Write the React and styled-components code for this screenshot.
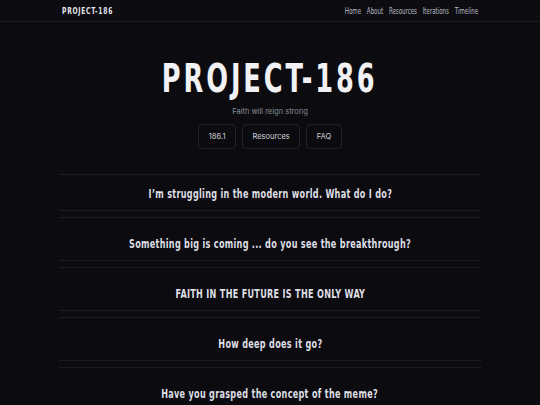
import React from 'react';
import styled, { createGlobalStyle } from 'styled-components';

const GlobalStyle = createGlobalStyle`
  html, body {
    margin: 0;
    padding: 0;
    background: #0c0c10;
  }
  body {
    min-height: 405px;
    font-family: Inter, "Noto Sans", sans-serif;
    color: #e4e4ea;
    overflow: hidden;
  }
`;

// no Oswald offline, so squeeze DejaVu Sans Condensed to its width
const condensed = `
  font-family: "DejaVu Sans", sans-serif;
  font-stretch: condensed;
`;

const Squeeze = styled.span`
  display: inline-block;
  white-space: nowrap;
  transform: scaleX(${(p) => p.$x || 0.75});
  transform-origin: ${(p) => p.$origin || 'center'};
`;

const TopBar = styled.header`
  height: 21px;
  border-bottom: 1px solid #1d1d23;
  background: #0d0d11;
`;

const TopInner = styled.div`
  width: 416px;
  height: 100%;
  margin: 0 auto;
  display: flex;
  align-items: center;
  justify-content: space-between;
`;

const Logo = styled.a`
  ${condensed}
  font-weight: 700;
  font-size: 9px;
  letter-spacing: 1px;
  color: #e6e6ee;
  text-decoration: none;
`;

const Nav = styled.nav`
  display: flex;
  gap: 8px;
  transform: scaleX(0.72);
  transform-origin: right center;
`;

const NavLink = styled.a`
  ${condensed}
  font-size: 8.5px;
  color: #b9bcc6;
  text-decoration: none;
`;

const Main = styled.main`
  width: 422px;
  margin: 0 auto;
`;

const Hero = styled.section`
  display: flex;
  flex-direction: column;
  align-items: center;
  padding-top: 33px;
`;

const Title = styled.h1`
  ${condensed}
  margin: 0;
  font-size: 39px;
  line-height: 48px;
  font-weight: 700;
  letter-spacing: 4px;
  color: #f2f2f5;
`;

const Tagline = styled.p`
  margin: 4px 0 0;
  font-size: 7.5px;
  line-height: 10px;
  color: #898c96;
`;

const Buttons = styled.div`
  display: flex;
  gap: 6px;
  margin-top: 7px;
`;

const PillButton = styled.a`
  display: flex;
  align-items: center;
  height: 25px;
  box-sizing: border-box;
  padding: 0 9.5px;
  border: 1px solid #212128;
  border-radius: 4px;
  font-size: 7.5px;
  color: #d2d3da;
  text-decoration: none;
`;

const FaqList = styled.section`
  display: flex;
  flex-direction: column;
  gap: 6px;
  margin-top: 25px;
`;

const FaqItem = styled.div`
  border-top: 1px solid #1b1b21;
  border-bottom: 1px solid #1b1b21;
  padding: ${(p) => (p.$first ? '11px' : '18px')} 0 8px;
  text-align: center;
`;

const Question = styled.h3`
  ${condensed}
  margin: 0;
  font-size: 12px;
  line-height: 16px;
  font-weight: 700;
  letter-spacing: 0.4px;
  color: #dedee5;
`;

const questions = [
  'I’m struggling in the modern world. What do I do?',
  'Something big is coming ... do you see the breakthrough?',
  'FAITH IN THE FUTURE IS THE ONLY WAY',
  'How deep does it go?',
  'Have you grasped the concept of the meme?',
];

const App = () => {
  return (
    <>
      <GlobalStyle />
      <TopBar>
        <TopInner>
          <Logo href="#">
            <Squeeze $x={0.74} $origin="left center">PROJECT-186</Squeeze>
          </Logo>
          <Nav>
            <NavLink href="#">Home</NavLink>
            <NavLink href="#">About</NavLink>
            <NavLink href="#">Resources</NavLink>
            <NavLink href="#">Iterations</NavLink>
            <NavLink href="#">Timeline</NavLink>
          </Nav>
        </TopInner>
      </TopBar>
      <Main>
        <Hero>
          <Title>
            <Squeeze $x={0.73}>PROJECT-186</Squeeze>
          </Title>
          <Tagline>Faith will reign strong</Tagline>
          <Buttons>
            <PillButton href="#">186.1</PillButton>
            <PillButton href="#">Resources</PillButton>
            <PillButton href="#">FAQ</PillButton>
          </Buttons>
        </Hero>
        <FaqList>
          {questions.map((q, i) => (
            <FaqItem key={q} $first={i === 0}>
              <Question>
                <Squeeze $x={0.75}>{q}</Squeeze>
              </Question>
            </FaqItem>
          ))}
        </FaqList>
      </Main>
    </>
  );
};

export default App;
